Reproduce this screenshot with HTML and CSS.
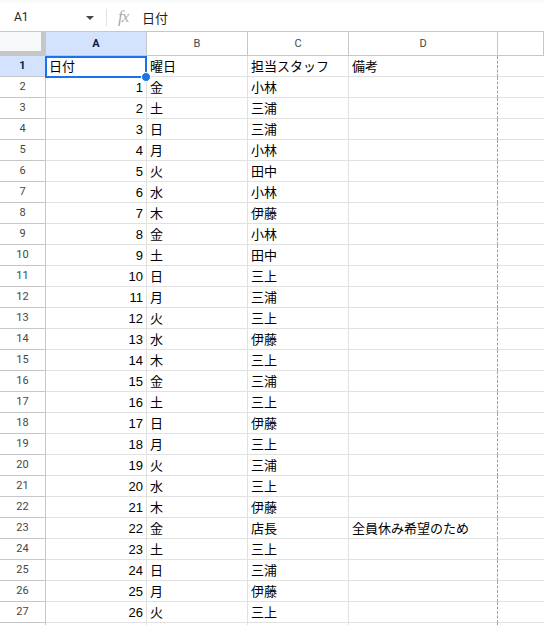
FILE: index.html
```html
<!DOCTYPE html>
<html lang="ja">
<head>
  <meta charset="UTF-8" />
  <meta name="viewport" content="width=device-width, initial-scale=1.0"/>
  <title>シフト表</title>
  <link rel="stylesheet" href="styles.css">
</head>
<body>
  <div class="strip"></div>

  <div class="formula-bar">
    <div class="name-box">A1</div>
    <span class="caret"></span>
    <span class="sep"></span>
    <span class="fx">fx</span>
    <div class="formula">日付</div>
  </div>

  <div class="sheet">
    <div class="row head">
      <div class="corner"></div>
      <div class="col a active">A</div>
      <div class="col b">B</div>
      <div class="col c">C</div>
      <div class="col d">D</div>
      <div class="col e"></div>
    </div>
    <div id="rows"></div>

    <div class="selection"><span class="handle"></span></div>
  </div>

  <script>
    // 日付・曜日・担当・備考
    const shifts = [
      ['日付', '曜日', '担当スタッフ', '備考'],
      [1, '金', '小林'], [2, '土', '三浦'], [3, '日', '三浦'], [4, '月', '小林'],
      [5, '火', '田中'], [6, '水', '小林'], [7, '木', '伊藤'], [8, '金', '小林'],
      [9, '土', '田中'], [10, '日', '三上'], [11, '月', '三浦'], [12, '火', '三上'],
      [13, '水', '伊藤'], [14, '木', '三上'], [15, '金', '三浦'], [16, '土', '三上'],
      [17, '日', '伊藤'], [18, '月', '三上'], [19, '火', '三浦'], [20, '水', '三上'],
      [21, '木', '伊藤'], [22, '金', '店長', '全員休み希望のため'], [23, '土', '三上'],
      [24, '日', '三浦'], [25, '月', '伊藤'], [26, '火', '三上']
    ];

    const elRows = document.getElementById('rows');

    function addRow(r, label, active) {
      const row = document.createElement('div');
      row.className = 'row';
      const num = typeof r[0] === 'number';
      row.innerHTML = `
        <div class="num${active ? ' active' : ''}">${label}</div>
        <div class="cell a${num ? ' right' : ''}">${r[0] ?? ''}</div>
        <div class="cell b">${r[1] ?? ''}</div>
        <div class="cell c">${r[2] ?? ''}</div>
        <div class="cell d">${r[3] ?? ''}</div>
        <div class="cell e"></div>
      `;
      elRows.appendChild(row);
    }

    shifts.forEach((r, i) => addRow(r, i + 1, i === 0));
    // 下端で切れている次の行（枠だけ）
    addRow([], '', false);
  </script>
</body>
</html>
```

FILE: styles.css
```css
body { margin: 0; width: 544px; height: 625px; overflow: hidden; background: #fff; font-family: "Liberation Sans", "Noto Sans CJK JP", sans-serif; color: #000; }

.strip { height: 3px; background: #f9fbfd; }

.formula-bar { height: 28px; display: flex; align-items: center; background: #fff; }
.name-box { width: 72px; padding-left: 14px; font-family: Roboto, "Noto Sans CJK JP", sans-serif; font-size: 12px; color: #1f1f1f; }
.caret { width: 0; height: 0; border-left: 4px solid transparent; border-right: 4px solid transparent; border-top: 4px solid #444746; margin-top: 1px; }
.sep { width: 1px; height: 17px; background: #e0e2e6; margin: 0 11px 0 12px; }
.fx { font-family: "Liberation Serif", serif; font-style: italic; font-size: 17px; color: #a8abae; width: 24px; letter-spacing: -1px; margin-top: -1px; }
.formula { font-size: 13px; color: #1f1f1f; }

.sheet { position: relative; border-top: 1px solid #c4c7c5; }

.row { display: flex; height: 21px; }
.head { height: 24px; }

.col, .cell, .num, .corner { box-sizing: border-box; flex: none; }
.a { width: 101px; }
.b, .c { width: 101px; }
.d { width: 149px; }
.e { flex: 1; }

.corner { width: 46px; height: 24px; background: #f8f9fa; border-right: 5px solid #c4c7c5; border-bottom: 5px solid #c4c7c5; }
.col { height: 24px; line-height: 23px; text-align: center; font-family: Roboto, sans-serif; font-size: 11px; color: #444746; border-right: 1px solid #c4c7c5; border-bottom: 1px solid #c4c7c5; }
.col.active { background: #d3e3fd; color: #041e49; font-weight: bold; }

.num { width: 46px; line-height: 20px; text-align: center; font-family: Roboto, sans-serif; font-size: 11px; color: #444746; border-right: 1px solid #c4c7c5; border-bottom: 1px solid #c4c7c5; }
.num.active { background: #d3e3fd; color: #041e49; font-weight: bold; }

.cell { line-height: 21px; padding: 0 3px; font-size: 13px; white-space: nowrap; overflow: visible; border-right: 1px solid #e1e1e1; border-bottom: 1px solid #e1e1e1; }
.cell.right { text-align: right; }
.cell.d { border-right: 1px dashed #9aa0a6; }
.cell.e { border-right: none; }

.selection { position: absolute; left: 45px; top: 24px; width: 102px; height: 22px; box-sizing: border-box; border: 2px solid #1a73e8; pointer-events: none; }
.handle { position: absolute; right: -6px; bottom: -6px; width: 8px; height: 8px; border-radius: 50%; background: #1a73e8; border: 1px solid #fff; }
```
